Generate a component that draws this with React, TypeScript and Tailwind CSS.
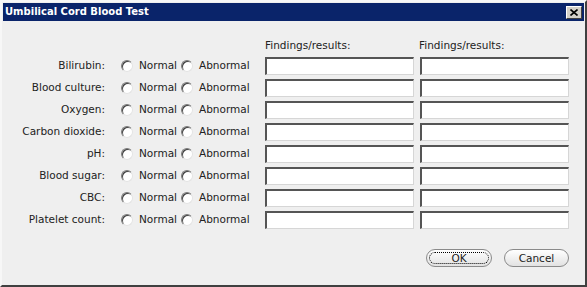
import React from 'react';

const rows = [
  'Bilirubin:',
  'Blood culture:',
  'Oxygen:',
  'Carbon dioxide:',
  'pH:',
  'Blood sugar:',
  'CBC:',
  'Platelet count:',
];

const font = { fontFamily: '"DejaVu Sans", Verdana, sans-serif' };

const Radio = () => (
  <span className="inline-block w-[12px] h-[12px] rounded-full bg-white border border-t-[#7a7a7a] border-l-[#7a7a7a] border-r-[#e4e4e4] border-b-[#e4e4e4] shadow-[inset_1px_1px_0_#404040] shrink-0" />
);

const Field = () => (
  <div className="w-[149px] h-[18px] bg-white border-t-2 border-l-2 border-t-[#555] border-l-[#555] border-r border-b border-r-[#d6d6d6] border-b-[#d6d6d6]" />
);

const App: React.FC = () => {
  return (
    <div className="w-[587px] h-[287px] bg-[#efefef] border-2 border-t-[#f7f7f7] border-l-[#f7f7f7] border-r-[#404040] border-b-[#404040] p-[1px] flex flex-col text-[10.5px] text-[#222]" style={font}>
      <div className="h-[18px] bg-[#0a246a] flex items-center justify-between pl-[2px] pr-[2px]">
        <span className="text-white font-bold text-[10px] leading-none">Umbilical Cord Blood Test</span>
        <button className="w-[16px] h-[13px] bg-[#d4d0c8] border border-t-white border-l-white border-r-[#404040] border-b-[#404040] flex items-center justify-center">
          <svg width="8" height="7" viewBox="0 0 8 7">
            <path d="M0.5 0.5 L7.5 6.5 M7.5 0.5 L0.5 6.5" stroke="#000" strokeWidth="1.6" />
          </svg>
        </button>
      </div>

      <div className="flex-1 flex flex-col">
        <div className="flex pt-[18px] h-[36px] leading-[12px]">
          <span className="ml-[262px] w-[154px]">Findings/results:</span>
          <span>Findings/results:</span>
        </div>
        <div className="flex flex-col gap-[4px]">
          {rows.map((label) => (
            <div key={label} className="flex items-center h-[18px]">
              <span className="w-[102px] text-right -mt-[1px]">{label}</span>
              <div className="ml-[16px] w-[60px] flex items-center gap-[6px]">
                <Radio />
                <span className="-mt-[1px]">Normal</span>
              </div>
              <div className="w-[84px] flex items-center gap-[6px]">
                <Radio />
                <span className="-mt-[1px]">Abnormal</span>
              </div>
              <div className="flex gap-[6px]">
                <Field />
                <Field />
              </div>
            </div>
          ))}
        </div>
        <div className="flex justify-end gap-[12px] mt-[20px] pr-[15px]">
          <button className="w-[66px] h-[18px] rounded-[9px] border border-[#8a8a8a] bg-gradient-to-b from-white to-[#e2e2e2] p-[2px] flex">
            <span className="flex-1 rounded-[6px] border border-dotted border-black flex items-center justify-center leading-none">OK</span>
          </button>
          <button className="w-[65px] h-[18px] rounded-[9px] border border-[#8a8a8a] bg-gradient-to-b from-white to-[#e2e2e2] flex items-center justify-center leading-none">
            Cancel
          </button>
        </div>
      </div>
    </div>
  );
};

export default App;
